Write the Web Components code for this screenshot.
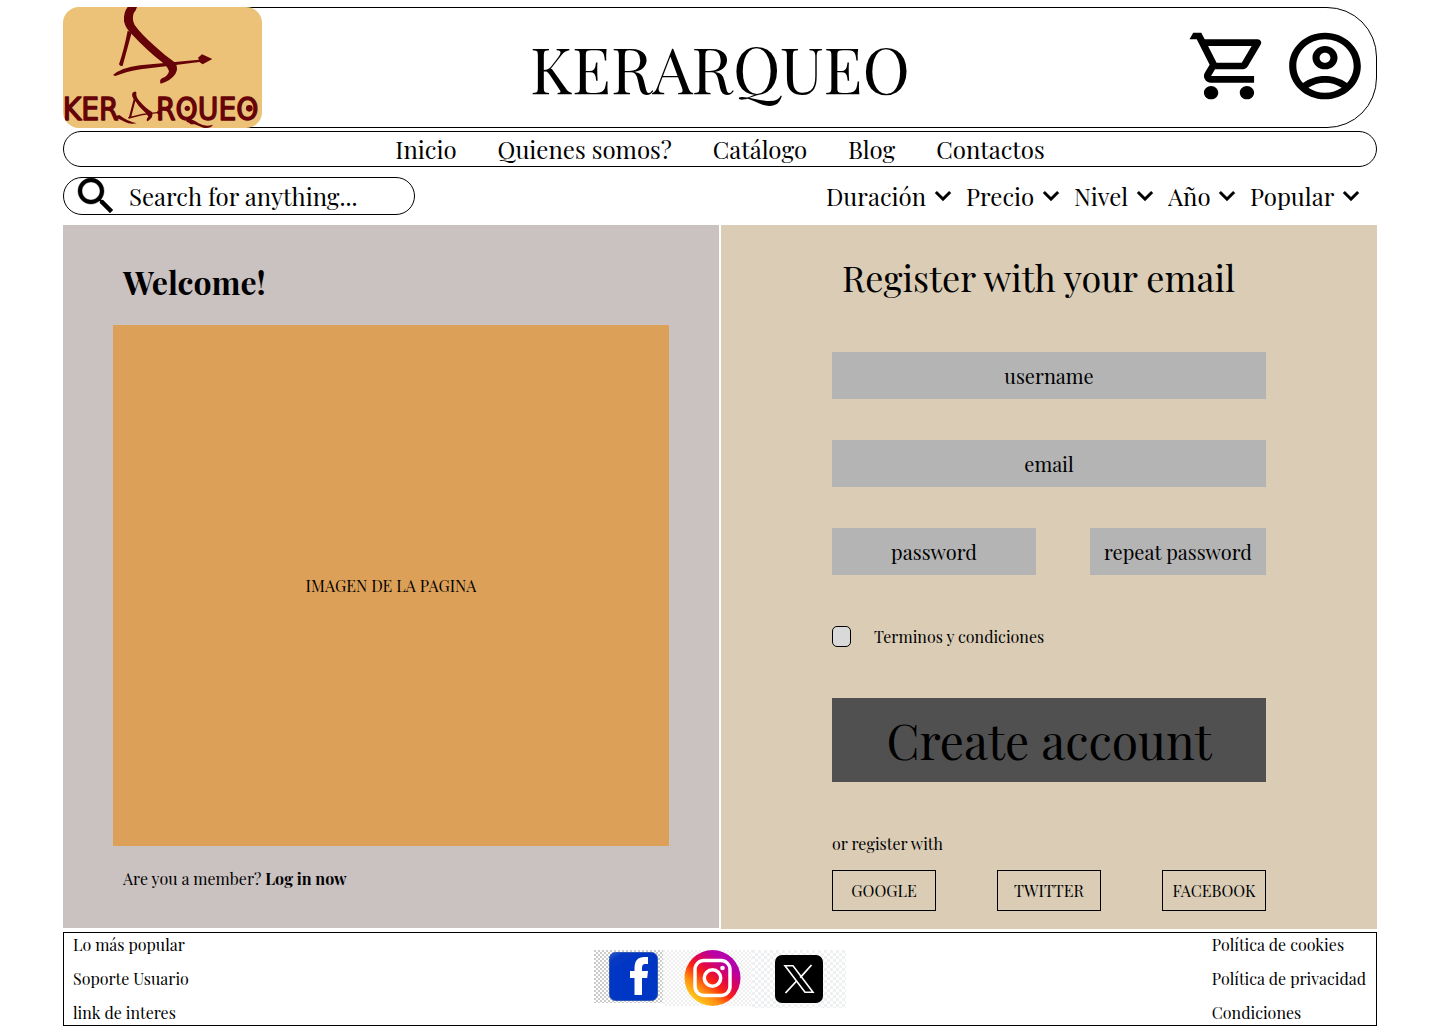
<!DOCTYPE html>
<html lang="es">
<head>
<meta charset="utf-8">
<meta name="viewport" content="width=device-width, initial-scale=1">
<title>KERARQUEO</title>
<style>
  body {
    margin: 0;
    background: #fff;
    color: #000;
    font-family: "Playfair Display", "Liberation Serif", serif;
  }
</style>
</head>
<body>
<kq-page></kq-page>

<script>
const base = `*, *::before, *::after { box-sizing: border-box; }
  a { color: inherit; text-decoration: none; }
  button, input, select { font: inherit; color: inherit; margin: 0; border-radius: 0; }
  svg { display: block; }`;

function define(name, html) {
  const template = document.createElement('template');
  template.innerHTML = html.replace('<style>', '<style>' + base);
  customElements.define(name, class extends HTMLElement {
    constructor() {
      super();
      this.attachShadow({ mode: 'open' }).append(template.content.cloneNode(true));
    }
  });
}

define('kq-logo', `<style>
  :host { display: block; width: 199px; height: 121px; border-radius: 16px; overflow: hidden; background: #ebc277; }
  svg { width: 100%; height: 100%; }
</style>
<svg viewBox="9 21 597 363" role="img" aria-label="Kerarqueo">
  <g fill="#650308">
    <path d="M203 21 L231 21 Q228 32 221 40 Q215 58 224 75 Q244 103 284 138 Q316 168 346 188 Q356 206 346 222 Q332 243 302 251 Q297 241 306 235 Q325 228 327 213 Q321 197 302 183 Q262 152 214 101 Q196 84 192 64 Q190 37 203 21Z"/>
    <path d="M203 92 L215 98 L188 197 Q181 201 177 193 Q192 148 203 92Z"/>
    <path d="M159 225 Q184 203 240 196 Q318 188 417 179 L414 173 L426 163 L457 177 L428 193 L418 186 Q325 198 242 208 Q199 215 166 228Z"/>
    <path d="M217 279 Q225 271 229 277 Q227 292 239 304 Q258 326 276 336 Q283 350 263 364 Q256 360 265 350 Q262 342 251 333 Q234 318 226 303 L213 353 L207 350 L221 298 Q214 288 217 279Z"/>
    <path d="M204 352 Q248 339 292 336 L292 332 L306 338 L294 343 L291 340 Q246 344 206 356Z"/>
    <circle cx="382" cy="325" r="8"/>
    <circle cx="568" cy="325" r="10"/>
    <path d="M160 350 Q177 356 194 365 Q208 374 230 370 Q202 364 178 345Z"/>
    <path d="M380 356 Q400 357 416 370 Q436 382 459 374 Q451 387 430 383 Q405 371 380 366Z"/>
  </g>
  <g fill="#650308" stroke="#650308" stroke-width="4" stroke-linejoin="round" font-family="'DejaVu Sans Condensed', 'DejaVu Sans', sans-serif" font-size="94">
    <text x="8" y="359">KER</text>
    <text x="288" y="359">RQUEO</text>
  </g>
</svg>`);

define('kq-header', `<style>
  :host { display: grid; grid-template-columns: 1fr auto 1fr; border: 1px solid #000; border-radius: 30px 50px 50px 30px; }
  kq-logo { margin: -1px; }
  h1 { margin: 0; align-self: center; font-size: 64px; line-height: 72px; font-weight: 400; }
  .actions { display: flex; gap: 10px; justify-content: flex-end; align-items: flex-start; padding: 18px 8px 0 0; }
  .actions a, .actions svg { display: block; width: 86px; height: 80px; }
</style>
<kq-logo></kq-logo>
<h1>KERARQUEO</h1>
<div class="actions">
  <a href="#carrito" aria-label="Carrito"><svg viewBox="0 0 24 24" preserveAspectRatio="none"><path d="M15.55 13c.75 0 1.41-.41 1.75-1.03l3.58-6.49A.996.996 0 0 0 20.01 4H5.21l-.94-2H2L1 4h2l3.6 7.59-1.35 2.44C4.52 15.37 5.48 17 7 17h12v-2H7l1.1-2h7.45zM6.16 6h12.15l-2.76 5H8.53L6.16 6zM7 18c-1.1 0-1.99.9-1.99 2S5.9 22 7 22s2-.9 2-2-.9-2-2-2zm10 0c-1.1 0-1.99.9-1.99 2s.89 2 1.99 2 2-.9 2-2-.9-2-2-2z"/></svg></a>
  <a href="#cuenta" aria-label="Cuenta"><svg viewBox="0 0 24 24" preserveAspectRatio="none"><path fill-rule="evenodd" d="M12 2C6.48 2 2 6.48 2 12s4.48 10 10 10 10-4.48 10-10S17.52 2 12 2zM7.350 18.500C8.660 17.560 10.260 17 12 17s3.340.56 4.650 1.500C15.340 19.440 13.740 20 12 20s-3.340-.56-4.650-1.500zm10.790-1.380C16.450 15.800 14.320 15 12 15s-4.450.8-6.140 2.120C4.700 15.730 4 13.950 4 12c0-4.420 3.580-8 8-8s8 3.580 8 8c0 1.950-.7 3.730-1.860 5.120zM12 6c-1.930 0-3.500 1.570-3.500 3.500S10.070 13 12 13s3.500-1.570 3.500-3.500S13.930 6 12 6zm0 5c-.83 0-1.500-.67-1.500-1.500S11.170 8 12 8s1.500.67 1.500 1.500S12.830 11 12 11z"/></svg></a>
</div>`);

define('kq-nav', `<style>
  :host { display: block; border: 1px solid #000; border-radius: 18px; }
  nav { display: flex; justify-content: center; gap: 41px; font-size: 24px; line-height: 34px; }
</style>
<nav>
  <a href="#inicio">Inicio</a><a href="#quienes">Quienes somos?</a><a href="#catalogo">Catálogo</a><a href="#blog">Blog</a><a href="#contactos">Contactos</a>
</nav>`);

define('kq-search', `<style>
  :host { display: block; width: 352px; border: 1px solid #000; border-radius: 19px; }
  label { display: flex; align-items: center; gap: 9px; height: 36px; padding: 0 20px 0 8px; }
  svg { width: 48px; height: 48px; flex: none; }
  input { flex: 1; min-width: 0; height: 36px; padding: 0; border: 0; background: none; outline: 0; font-size: 24px; }
  input::placeholder { color: #000; opacity: 1; }
</style>
<label><svg viewBox="0 0 24 24" aria-hidden="true"><path stroke="#000" stroke-width=".2" d="M15.500 14h-.79l-.28-.27C15.410 12.590 16 11.110 16 9.500 16 5.910 13.090 3 9.500 3S3 5.910 3 9.500 5.910 16 9.500 16c1.610 0 3.090-.59 4.230-1.570l.27.28v.79l5 4.990L20.490 19l-4.990-5zm-6 0C7.010 14 5 11.990 5 9.500S7.010 5 9.500 5 14 7.010 14 9.500 11.990 14 9.500 14z"/></svg>
<input type="text" placeholder="Search for anything..." aria-label="Search for anything..."></label>`);

class KqFilter extends HTMLElement {
  constructor() {
    super();
    const name = this.getAttribute('name');
    this.attachShadow({ mode: 'open' }).innerHTML = `<style>${base}
      :host { display: grid; align-items: center; justify-items: end; }
      select, svg { grid-area: 1 / 1; }
      select { appearance: none; border: 0; background: none; padding: 0 32px 0 0; font-size: 24px; line-height: 32px; }
      svg { width: 32px; height: 32px; pointer-events: none; }
    </style>
    <select aria-label="${name}"><option>${name}</option></select>
    <svg viewBox="0 0 24 24" aria-hidden="true"><path stroke="#000" stroke-width=".3" d="M16.590 8.400 12 12.980 7.410 8.400 6 9.810l6 6 6-6z"/></svg>`;
  }
}
customElements.define('kq-filter', KqFilter);

define('kq-toolbar', `<style>
  :host { display: flex; justify-content: space-between; align-items: center; padding-right: 10px; }
  .filters { display: flex; gap: 7px; }
</style>
<kq-search></kq-search>
<div class="filters">
  <kq-filter name="Duración"></kq-filter><kq-filter name="Precio"></kq-filter><kq-filter name="Nivel"></kq-filter><kq-filter name="Año"></kq-filter><kq-filter name="Popular"></kq-filter>
</div>`);

define('kq-welcome', `<style>
  :host { display: flex; flex-direction: column; padding: 35px 50px 38px; margin-bottom: 1px; background: #cac1c1; }
  h2 { margin: 0 10px 21px; font-size: 32px; line-height: 44px; font-weight: 700; }
  .image { flex: 1; min-height: 521px; display: grid; place-items: center; background: #dda059; font-size: 16px; }
  p { margin: 22px 10px 0; font-size: 16px; line-height: 22px; }
  a { font-weight: 700; }
</style>
<h2>Welcome!</h2>
<div class="image">IMAGEN DE LA PAGINA</div>
<p>Are you a member? <a href="#login">Log in now</a></p>`);

define('kq-register', `<style>
  :host { display: block; padding: 28px 111px 18px; background: #daccb5; }
  h2 { margin: 0 0 51px 10px; font-size: 36px; line-height: 48px; font-weight: 400; white-space: nowrap; }
  form { display: flex; flex-direction: column; }
  .fields { display: flex; flex-direction: column; gap: 41px; }
  .fields input { width: 100%; height: 47px; padding: 0 8px; border: 0; background: #b4b4b4; text-align: center; font-size: 20px; }
  input::placeholder { color: #000; opacity: 1; }
  .pair { display: grid; grid-template-columns: 204fr 176fr; gap: 54px; }
  .terms { display: flex; align-items: center; gap: 23px; margin: 51px 0; font-size: 16px; line-height: 21px; }
  .terms input { appearance: none; width: 19px; height: 21px; border: 1px solid #000; border-radius: 5px; background: #d9d9d9; }
  .terms input:checked { background: #505050; }
  .create { height: 84px; padding: 0; border: 0; background: #505050; font-size: 48px; }
  p { margin: 51px 0 15px; font-size: 16px; line-height: 22px; }
  .providers { display: flex; justify-content: space-between; }
  .providers button { width: 104px; height: 41px; padding: 0; border: 1px solid #000; background: none; font-size: 16px; }
</style>
<h2>Register with your email</h2>
<form>
  <div class="fields">
    <input type="text" placeholder="username" aria-label="username">
    <input type="email" placeholder="email" aria-label="email">
    <div class="pair">
      <input type="password" placeholder="password" aria-label="password">
      <input type="password" placeholder="repeat password" aria-label="repeat password">
    </div>
  </div>
  <label class="terms"><input type="checkbox">Terminos y condiciones</label>
  <button class="create" type="button">Create account</button>
  <p>or register with</p>
  <div class="providers">
    <button type="button">GOOGLE</button><button type="button">TWITTER</button><button type="button">FACEBOOK</button>
  </div>
</form>`);

define('kq-social', `<style>
  :host { display: flex; align-items: flex-start; padding-top: 17px; }
  a, svg { display: block; }
</style>
<a href="#facebook" aria-label="Facebook"><svg width="69" height="53" viewBox="0 0 69 53">
  <defs>
    <pattern id="cf" width="4" height="4" patternUnits="userSpaceOnUse"><path fill="#fff" d="M0 0h4v4H0z"/><path fill="#cbcbcb" d="M0 0h2v2H0zM2 2h2v2H2z"/></pattern>
    <linearGradient id="gf" x2="1" y2="1"><stop offset="0" stop-color="#2a5bd0"/><stop offset=".3" stop-color="#0638c2"/></linearGradient>
  </defs>
  <path fill="url(#cf)" d="M0 0h69v53H0z"/>
  <rect x="15.500" y="2.500" width="48" height="48" rx="6" fill="#0036c4" stroke="#3158b4"/>
  <path d="M16 18V8q0-5 5-5h20Q34 11 16 18z" fill="url(#gf)"/>
  <path d="M40.500 45V28H36v-7h4.500v-3q0-11 10-11H54v7h-3q-3 0-3 4v3h6l-.8 7H48v17z" fill="#fff"/>
</svg></a>
<a href="#instagram" aria-label="Instagram"><svg width="89" height="56" viewBox="0 0 89 56">
  <defs>
    <pattern id="ci" width="4" height="4" patternUnits="userSpaceOnUse"><path fill="#fff" d="M0 0h4v4H0z"/><path fill="#efefef" d="M0 0h2v2H0zM2 2h2v2H2z"/></pattern>
    <linearGradient id="gi" x1=".15" y1=".9" x2=".8" y2=".1"><stop offset="0" stop-color="#ffd21f"/><stop offset=".25" stop-color="#ff8a12"/><stop offset=".45" stop-color="#fa2410"/><stop offset=".62" stop-color="#e0054d"/><stop offset=".85" stop-color="#b900a4"/><stop offset="1" stop-color="#b300b0"/></linearGradient>
  </defs>
  <path fill="url(#ci)" d="M0 0h89v56H0z"/>
  <circle cx="49.500" cy="28" r="28" fill="url(#gi)"/>
  <g fill="none" stroke="#fff" stroke-width="3.500"><rect x="32" y="10.500" width="35" height="35" rx="9"/><circle cx="49.500" cy="28" r="8.200"/></g>
  <circle cx="59.500" cy="18" r="2.300" fill="#fff"/>
</svg></a>
<a href="#x" aria-label="X"><svg width="94" height="58" viewBox="0 0 94 58">
  <defs><pattern id="cx" width="6" height="6" patternUnits="userSpaceOnUse"><path fill="#fff" d="M0 0h6v6H0z"/><path fill="#eff0f2" d="M0 0h3v3H0zM3 3h3v3H3z"/></pattern></defs>
  <path fill="url(#cx)" d="M0 0h94v58H0z"/>
  <rect x="23" y="5" width="48" height="48" rx="7"/>
  <path d="M33 15.800h8l20 26.400h-8z" fill="none" stroke="#fff" stroke-width="1.600"/>
  <path d="M59.500 15 48.200 27.600M44.600 31 33.500 43" stroke="#fff" stroke-width="1.800"/>
</svg></a>`);

define('kq-footer', `<style>
  :host { display: grid; grid-template-columns: 1fr auto 1fr; border: 1px solid #000; padding: 0 10px 0 9px; font-size: 16px; line-height: 24px; }
  .links { display: flex; flex-direction: column; align-items: flex-start; gap: 10px; }
  .links:last-child { justify-self: end; }
</style>
<div class="links"><a href="#popular">Lo más popular</a><a href="#soporte">Soporte Usuario</a><a href="#interes">link de interes</a></div>
<kq-social></kq-social>
<div class="links"><a href="#cookies">Política de cookies</a><a href="#privacidad">Política de privacidad</a><a href="#condiciones">Condiciones</a></div>`);

define('kq-page', `<style>
  :host { display: flex; flex-direction: column; padding: 7px 63px; }
  kq-nav { margin-top: 3px; }
  kq-toolbar { margin: 10px 0; }
  main { display: grid; grid-template-columns: minmax(0, 1fr) minmax(0, 1fr); gap: 2px; margin-bottom: 3px; }
</style>
<kq-header></kq-header>
<kq-nav></kq-nav>
<kq-toolbar></kq-toolbar>
<main><kq-welcome></kq-welcome><kq-register></kq-register></main>
<kq-footer></kq-footer>`);
</script>
</body>
</html>
